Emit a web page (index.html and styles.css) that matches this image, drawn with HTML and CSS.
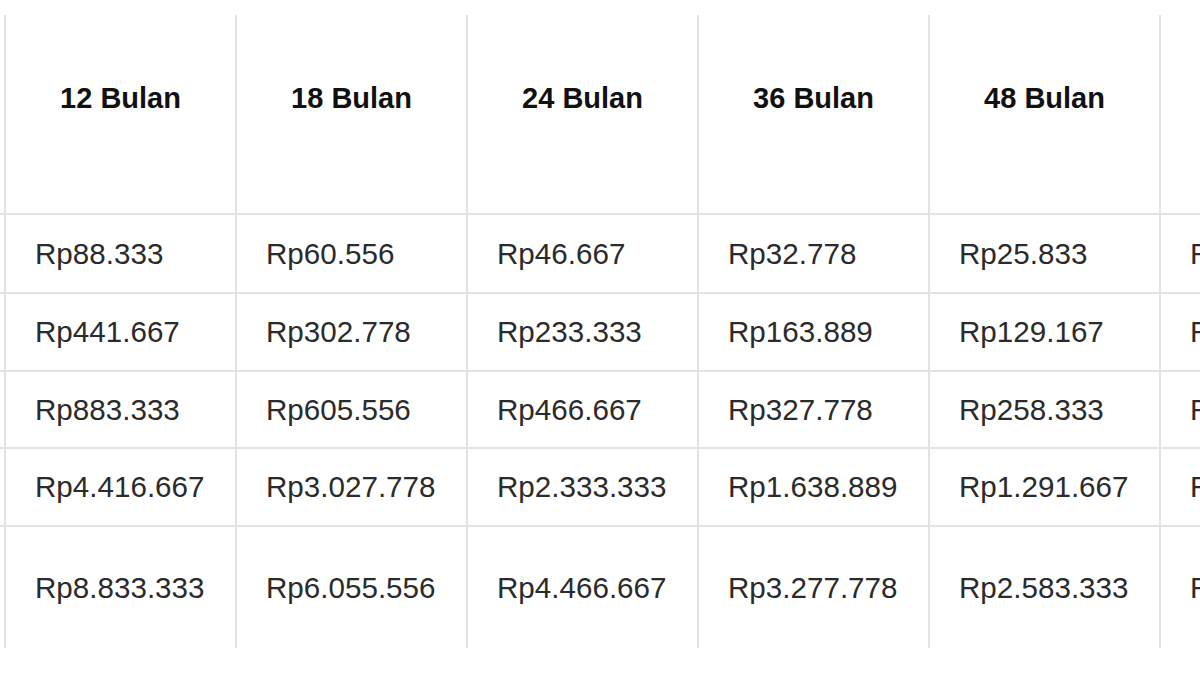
FILE: index.html
```html
<!DOCTYPE html>
<html lang="id">
<head>
<meta charset="utf-8">
<title>Tabel Cicilan</title>
<link rel="stylesheet" href="styles.css">
</head>
<body>
<div class="viewport">
  <div class="table">
    <div class="cell head"></div>
    <div class="cell head">12 Bulan</div>
    <div class="cell head">18 Bulan</div>
    <div class="cell head">24 Bulan</div>
    <div class="cell head">36 Bulan</div>
    <div class="cell head">48 Bulan</div>
    <div class="cell head">60 Bulan</div>

    <div class="cell"></div>
    <div class="cell">Rp88.333</div>
    <div class="cell">Rp60.556</div>
    <div class="cell">Rp46.667</div>
    <div class="cell">Rp32.778</div>
    <div class="cell">Rp25.833</div>
    <div class="cell">Rp21.667</div>

    <div class="cell"></div>
    <div class="cell">Rp441.667</div>
    <div class="cell">Rp302.778</div>
    <div class="cell">Rp233.333</div>
    <div class="cell">Rp163.889</div>
    <div class="cell">Rp129.167</div>
    <div class="cell">Rp108.333</div>

    <div class="cell"></div>
    <div class="cell">Rp883.333</div>
    <div class="cell">Rp605.556</div>
    <div class="cell">Rp466.667</div>
    <div class="cell">Rp327.778</div>
    <div class="cell">Rp258.333</div>
    <div class="cell">Rp216.667</div>

    <div class="cell"></div>
    <div class="cell">Rp4.416.667</div>
    <div class="cell">Rp3.027.778</div>
    <div class="cell">Rp2.333.333</div>
    <div class="cell">Rp1.638.889</div>
    <div class="cell">Rp1.291.667</div>
    <div class="cell">Rp1.083.333</div>

    <div class="cell"></div>
    <div class="cell">Rp8.833.333</div>
    <div class="cell">Rp6.055.556</div>
    <div class="cell">Rp4.466.667</div>
    <div class="cell">Rp3.277.778</div>
    <div class="cell">Rp2.583.333</div>
    <div class="cell">Rp2.166.667</div>
  </div>
</div>
</body>
</html>
```

FILE: styles.css
```css
* { box-sizing: border-box; }

html, body {
  margin: 0;
  padding: 0;
  background: #ffffff;
}

.viewport {
  width: 1200px;
  height: 675px;
  overflow: hidden;
  padding-top: 15px;
}

.table {
  display: grid;
  grid-template-columns: repeat(7, 231px);
  grid-template-rows: 198px 79px 78px 77px 78px 123px;
  width: 1617px;
  margin-left: -227px;
  font-family: "Liberation Sans", Arial, sans-serif;
  font-size: 29.6px;
  color: #2b2b2b;
}

.cell {
  border-left: 2px solid #e1e3e4;
  border-top: 2px solid #e1e3e4;
  display: flex;
  align-items: center;
  padding-left: 29px;
  white-space: nowrap;
}

.cell.head {
  border-top: none;
  align-items: flex-start;
  justify-content: center;
  padding-left: 0;
  padding-top: 67px;
  font-size: 29px;
  font-weight: bold;
  color: #111111;
}
```
